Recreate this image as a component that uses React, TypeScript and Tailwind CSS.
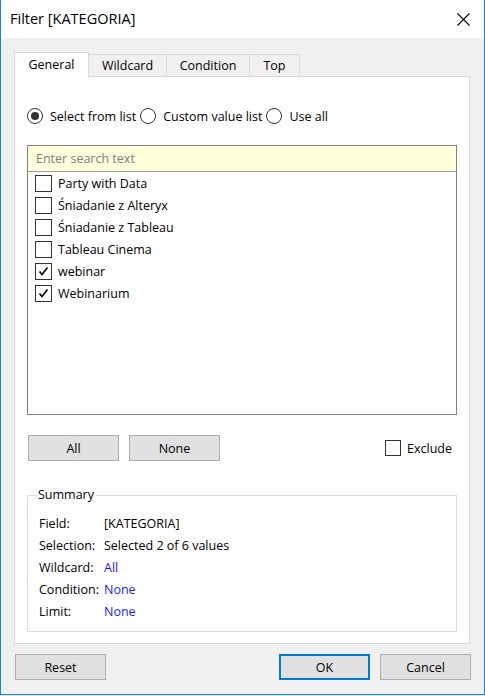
import React from 'react';

const font = { fontFamily: '"Open Sans", "Noto Sans", sans-serif' };

const items = [
  { label: 'Party with Data', checked: false },
  { label: 'Śniadanie z Alteryx', checked: false },
  { label: 'Śniadanie z Tableau', checked: false },
  { label: 'Tableau Cinema', checked: false },
  { label: 'webinar', checked: true },
  { label: 'Webinarium', checked: true },
];

const summary = [
  { k: 'Field:', v: '[KATEGORIA]', link: false },
  { k: 'Selection:', v: 'Selected 2 of 6 values', link: false },
  { k: 'Wildcard:', v: 'All', link: true },
  { k: 'Condition:', v: 'None', link: true },
  { k: 'Limit:', v: 'None', link: true },
];

const CheckBox: React.FC<{ checked?: boolean }> = ({ checked }) => (
  <div className="w-[17px] h-[17px] border border-[#333333] bg-white flex items-center justify-center shrink-0">
    {checked && (
      <svg width="11" height="11" viewBox="0 0 11 11">
        <path d="M1.5 5.5 L4 8.5 L9.5 1.5" fill="none" stroke="#000" strokeWidth="1.6" />
      </svg>
    )}
  </div>
);

const Radio: React.FC<{ on?: boolean; label: string }> = ({ on, label }) => (
  <div className="flex items-center">
    <div className="w-[16px] h-[16px] rounded-full border border-[#333333] bg-white flex items-center justify-center shrink-0">
      {on && <div className="w-[8px] h-[8px] rounded-full bg-[#333333]" />}
    </div>
    <span className="ml-[7px] pt-[2px]">{label}</span>
  </div>
);

const Btn: React.FC<{ label: string; primary?: boolean }> = ({ label, primary }) => (
  <div
    className={
      'w-[91px] h-[26px] bg-[#e1e1e1] flex items-center justify-center ' +
      (primary ? 'border-2 border-[#0078d7]' : 'border border-[#adadad]')
    }
  >
    <span className="pt-[2px]">{label}</span>
  </div>
);

export default function App() {
  return (
    <div className="w-[485px] h-[696px] bg-[#e6e6e6] text-[12.5px] text-black leading-none" style={font}>
      <div className="w-[485px] h-[695px] border-x border-b border-[#1883d7] bg-[#f0f0f0] flex flex-col">
        {/* title bar */}
        <div className="h-[38px] bg-white flex items-center justify-between pl-[9px] pr-[14px]">
          <span className="text-[14.5px]">Filter [KATEGORIA]</span>
          <svg width="13" height="13" viewBox="0 0 13 13">
            <path d="M0.5 0.5 L12.5 12.5 M12.5 0.5 L0.5 12.5" stroke="#000" strokeWidth="1.1" />
          </svg>
        </div>

        <div className="px-[13px] pt-[14px] flex flex-col">
          {/* tabs */}
          <div className="flex items-end h-[25px] relative z-10">
            <div className="w-[75px] h-[25px] bg-white border border-b-0 border-[#d9d9d9] flex items-center justify-center">
              General
            </div>
            <div className="w-[78px] h-[23px] border border-l-0 border-b-0 border-[#d9d9d9] flex items-center justify-center">
              Wildcard
            </div>
            <div className="w-[83px] h-[23px] border border-l-0 border-b-0 border-[#d9d9d9] flex items-center justify-center">
              Condition
            </div>
            <div className="w-[50px] h-[23px] border border-l-0 border-b-0 border-[#d9d9d9] flex items-center justify-center">
              Top
            </div>
          </div>

          {/* panel */}
          <div className="w-[456px] h-[568px] -mt-[1px] bg-white border border-[#d9d9d9] px-[12px] flex flex-col">
            <div className="h-[20px] mt-[29px] flex items-center gap-[4px]">
              <Radio on label="Select from list" />
              <Radio label="Custom value list" />
              <Radio label="Use all" />
            </div>

            <div className="mt-[19px] h-[270px] border border-[#828282] flex flex-col">
              <div className="h-[26px] bg-[#ffffdc] border-b border-[#a0a0a0] flex items-center pl-[8px] text-[#808080]">
                <span className="pt-[2px]">Enter search text</span>
              </div>
              {items.map((it) => (
                <div key={it.label} className="h-[22px] flex items-center pl-[7px]">
                  <CheckBox checked={it.checked} />
                  <span className="ml-[6px] pt-[2px]">{it.label}</span>
                </div>
              ))}
            </div>

            <div className="mt-[20px] flex items-center pl-[1px]">
              <Btn label="All" />
              <div className="w-[10px]" />
              <Btn label="None" />
              <div className="flex-1" />
              <div className="flex items-center pr-[5px]">
                <div className="w-[16px] h-[16px] border border-[#333333] bg-white" />
                <span className="ml-[6px] pt-[2px]">Exclude</span>
              </div>
            </div>

            <fieldset className="mt-[28px] border border-[#dcdcdc] pl-[11px] pb-[8px]">
              <legend className="ml-[-2px] px-[1px]">Summary</legend>
              <div className="flex flex-col pt-[11px]">
                {summary.map((r) => (
                  <div key={r.k} className="h-[22px] flex items-center pt-[2px]">
                    <span className="w-[65px]">{r.k}</span>
                    <span className={r.link ? 'text-[#1a1aff]' : ''}>{r.v}</span>
                  </div>
                ))}
              </div>
            </fieldset>
          </div>

          {/* footer */}
          <div className="mt-[10px] flex items-center pl-[1px]">
            <Btn label="Reset" />
            <div className="flex-1" />
            <Btn label="OK" primary />
            <div className="w-[10px]" />
            <Btn label="Cancel" />
          </div>
        </div>
      </div>
    </div>
  );
}
